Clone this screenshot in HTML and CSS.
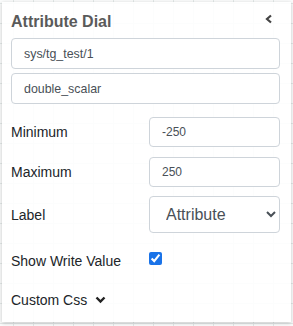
FILE: index.html
```html
<!DOCTYPE html>
<html lang="en">
<head>
    <meta charset="UTF-8">
    <meta name="viewport" content="width=device-width, initial-scale=1.0">
    <title>Attribute Dial</title>
    <link rel="stylesheet" href="styles.css">
</head>
<body>
    <div class="panel">
        <div class="panel-header">
            <h3>Attribute Dial</h3>
            <svg class="collapse" width="8" height="10" viewBox="0 0 8 10">
                <polyline points="6,1.5 2,5 6,8.5" fill="none" stroke="#444" stroke-width="2.2"/>
            </svg>
        </div>

        <input class="field" type="text" value="sys/tg_test/1">
        <input class="field second" type="text" value="double_scalar">

        <div class="row first-row">
            <label>Minimum</label>
            <input class="field small" type="text" value="-250">
        </div>
        <div class="row max-row">
            <label>Maximum</label>
            <input class="field small" type="text" value="250">
        </div>
        <div class="row select-row">
            <label>Label</label>
            <select class="picker">
                <option>Attribute</option>
                <option>Device</option>
                <option>None</option>
            </select>
        </div>
        <div class="row check-row">
            <label>Show Write Value</label>
            <input type="checkbox" class="check" checked>
        </div>

        <div class="custom-css">
            <span>Custom Css</span>
            <svg width="11" height="8" viewBox="0 0 11 8">
                <polyline points="1.5,1.5 5.5,5.5 9.5,1.5" fill="none" stroke="#222" stroke-width="2.4"/>
            </svg>
        </div>
    </div>
</body>
</html>
```

FILE: styles.css
```css
body {
    margin: 0;
    padding: 0;
    font-family: "Liberation Sans", Arial, sans-serif;
    background-color: #fbfcfc;
    background-image:
        linear-gradient(to right, #e3e9e8 1px, transparent 1px),
        linear-gradient(to bottom, #e3e9e8 1px, transparent 1px);
    background-size: 20px 20px;
    background-position: 13px 3px;
    height: 326px;
    overflow: hidden;
}

.panel {
    margin: 2px;
    width: 289px;
    height: 320px;
    box-sizing: border-box;
    padding: 10px 11px 0 9px;
    background: rgba(255, 255, 255, 0.88);
    box-shadow: 0 1px 4px rgba(0, 0, 0, 0.22);
}

.panel-header {
    display: flex;
    justify-content: space-between;
    align-items: center;
    height: 20px;
    margin-bottom: 6px;
}

.panel-header h3 {
    margin: 0;
    font-size: 16px;
    line-height: 20px;
    font-weight: bold;
    color: #5a5a5a;
}

.collapse {
    margin-right: 7px;
    margin-top: -6px;
}

.field {
    display: block;
    box-sizing: border-box;
    width: 100%;
    height: 31px;
    padding: 0 12px;
    font-family: "Liberation Sans", Arial, sans-serif;
    font-size: 12.4px;
    color: #495057;
    background: #fff;
    border: 1px solid #ced4da;
    border-radius: 4px;
    outline: none;
}

.field.second {
    margin-top: 4px;
}

.row {
    display: flex;
    align-items: center;
}

.row label {
    width: 138px;
    flex: none;
    font-size: 14px;
    color: #212529;
}

.field.small {
    height: 30px;
    font-size: 12px;
}

.first-row {
    margin-top: 13px;
}

.max-row {
    margin-top: 10px;
}

.select-row {
    margin-top: 9px;
}

.picker {
    flex: 1;
    box-sizing: border-box;
    height: 37px;
    padding: 0 6px 0 12px;
    font-family: "Liberation Sans", Arial, sans-serif;
    font-size: 16px;
    color: #495057;
    background: #fff;
    border: 1px solid #ced4da;
    border-radius: 4px;
    outline: none;
}

.check-row {
    margin-top: 17px;
    height: 22px;
    align-items: flex-start;
}

.check-row label {
    line-height: 22px;
}

.check {
    margin: 2px 0 0 0;
    width: 13px;
    height: 13px;
    accent-color: #1a73e8;
}

.custom-css {
    display: flex;
    align-items: center;
    gap: 8px;
    margin-top: 18px;
    height: 20px;
    font-size: 14px;
    color: #212529;
}
```
